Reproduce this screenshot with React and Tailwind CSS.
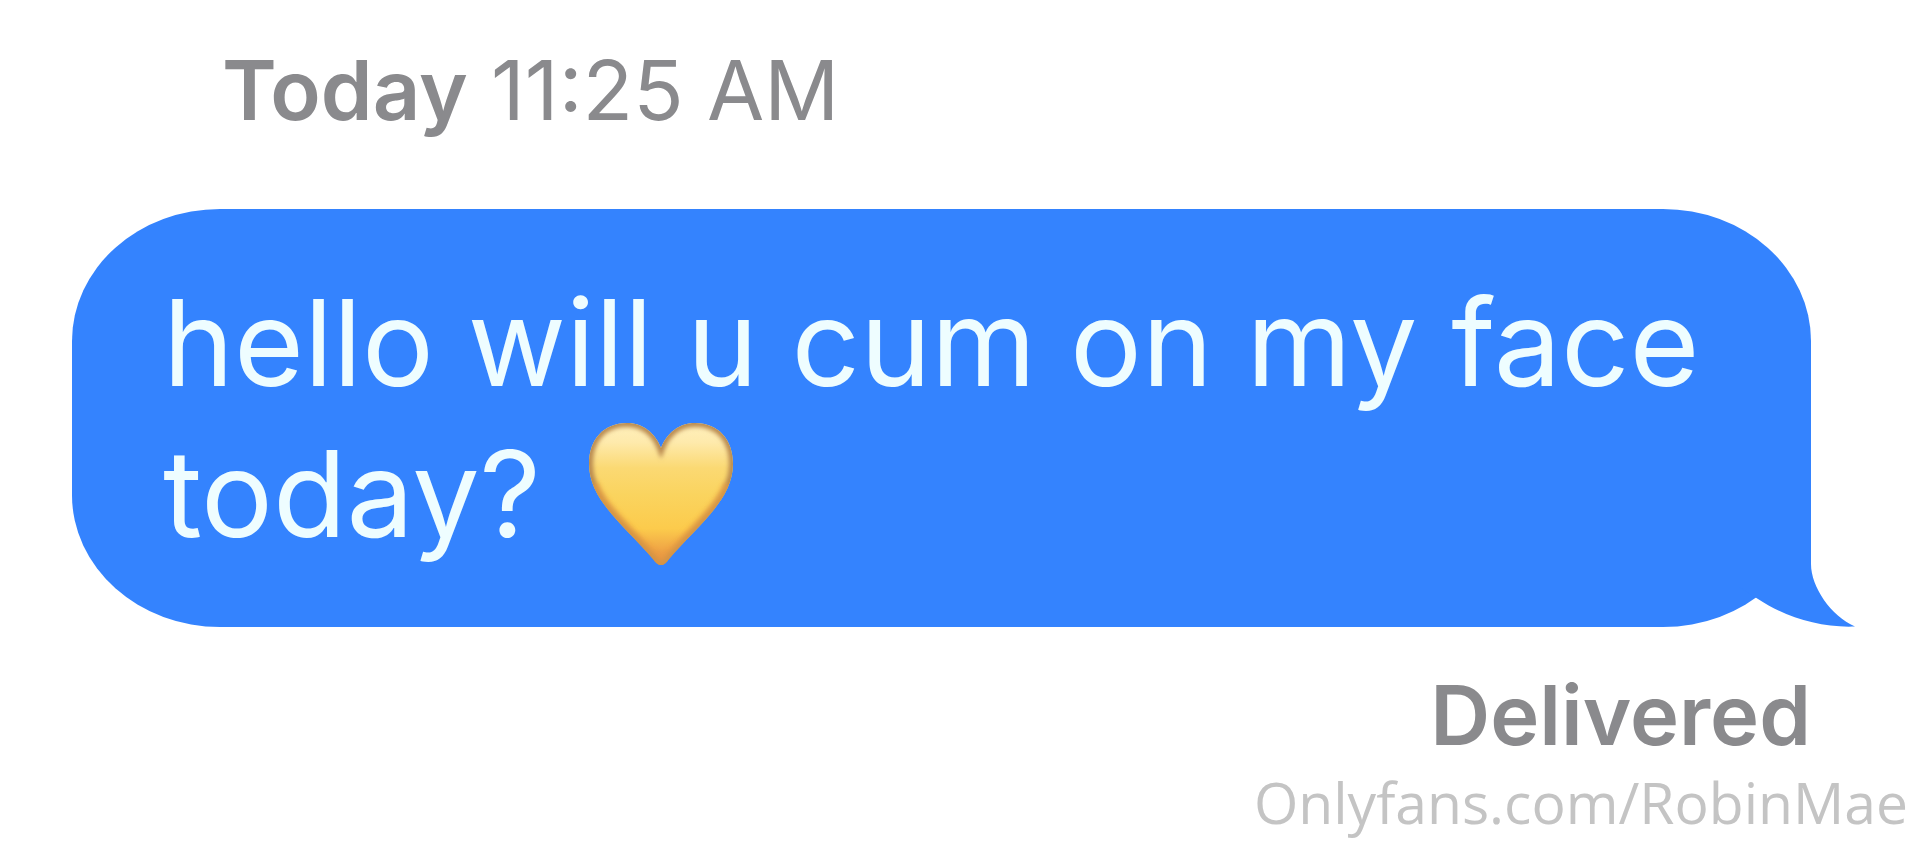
function BubbleTail() {
  return (
    <svg
      className="absolute bottom-0 -right-11 h-[148px] w-[120px]"
      viewBox="0 0 120 148"
      fill="#3483fe"
      aria-hidden="true"
    >
      <path d="M76 0 V85 C76 108 96 137 120 147.500 C86 149 50 138 23 120 L4 108 V0 Z" />
    </svg>
  );
}

function YellowHeart() {
  return (
    <svg
      className="h-36 w-36"
      viewBox="0 0 144 144"
      role="img"
      aria-label="yellow heart"
    >
      <defs>
        <linearGradient id="heartFill" x1="0" y1="0" x2="0" y2="1">
          <stop offset="0" stopColor="#fff0bd" />
          <stop offset="0.14" stopColor="#feeaac" />
          <stop offset="0.32" stopColor="#fbd973" />
          <stop offset="0.5" stopColor="#fad45f" />
          <stop offset="0.74" stopColor="#fccb4c" />
          <stop offset="0.88" stopColor="#f0a746" />
          <stop offset="1" stopColor="#dd8545" />
        </linearGradient>
        <filter id="heartSoft" x="-10%" y="-10%" width="120%" height="120%">
          <feGaussianBlur stdDeviation="2" />
        </filter>
        <clipPath id="heartClip">
          <path d="M72 143 C69 143 67 141 64 137 C36 104 0 78 0 42 C0 17 15 1 38 1 C54 1 66 11 72 26 C78 11 90 1 106 1 C129 1 144 17 144 42 C144 78 108 104 80 137 C77 141 75 143 72 143 Z" />
        </clipPath>
      </defs>
      <g clipPath="url(#heartClip)">
        <rect width="144" height="144" fill="url(#heartFill)" />
        <path
          d="M72 143 C69 143 67 141 64 137 C36 104 0 78 0 42 C0 17 15 1 38 1 C54 1 66 11 72 26 C78 11 90 1 106 1 C129 1 144 17 144 42 C144 78 108 104 80 137 C77 141 75 143 72 143 Z"
          fill="none"
          stroke="#b98a50"
          strokeWidth="8"
          filter="url(#heartSoft)"
        />
        <path
          d="M4 62 C14 88 44 112 72 143 C100 112 130 88 140 62"
          fill="none"
          stroke="#ef9d3c"
          strokeWidth="12"
          opacity="0.5"
          filter="url(#heartSoft)"
        />
      </g>
    </svg>
  );
}

export default function App() {
  return (
    <main className="min-h-screen overflow-hidden bg-white font-['Inter',sans-serif] text-[#8a8a8d]">
      <header className="pt-10 pl-[222px] text-[83px] leading-[100px]">
        <time>
          <b className="font-semibold">Today</b> 11:25 AM
        </time>
      </header>

      <section className="relative mt-[69px] mr-[109px] ml-[72px] rounded-[148px/132px] bg-[#3483fe] pt-[58px] pr-20 pb-[58px] pl-[91px]">
        <p className="text-[120px] leading-[151px] text-[#eefdff]">
          <span className="block whitespace-nowrap">
            hello will u cum on my face
          </span>
          <span className="flex items-center gap-12">
            today? <YellowHeart />
          </span>
        </p>
        <BubbleTail />
      </section>

      <footer className="flex flex-col items-end">
        <p className="mt-[38px] mr-[109px] text-[83px] leading-[100px] font-semibold">
          Delivered
        </p>
        <a
          href="https://onlyfans.com/RobinMae"
          className="mr-3 font-['Open_Sans',sans-serif] text-[57px] leading-[75px] text-[#c4c4c4]"
        >
          Onlyfans.com/RobinMae
        </a>
      </footer>
    </main>
  );
}
